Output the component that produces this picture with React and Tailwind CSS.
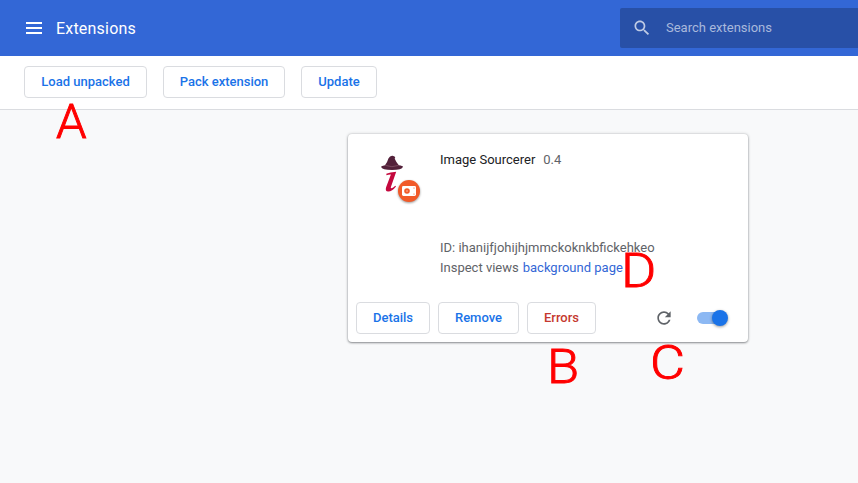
import React from "react";

function OutlineButton({ children, className = "" }) {
  return (
    <button
      className={`flex h-8 items-center justify-center rounded border border-[#dadce0] bg-white pb-px text-[13px] font-medium whitespace-nowrap ${className}`}
    >
      {children}
    </button>
  );
}

function Callout({ children, className }) {
  return (
    <span className={`absolute origin-left text-[49px] leading-[50px] font-light text-[#ff0000] [-webkit-text-stroke:0.9px_#ff0000] ${className}`}>
      {children}
    </span>
  );
}

function ExtensionIcon() {
  return (
    <svg width="48" height="56" viewBox="0 0 48 56" className="block overflow-visible">
      <path
        d="M9 15.300 Q11.500 12 12.400 8.500 Q14 5.400 16.500 5.700 Q19.300 6 19.300 8 L18.600 8.600 Q20 12 22.800 15.300 Q26.800 15.900 27 16.800 Q26 20 16 20 Q6 20 5 16.800 Q5.500 15.800 9 15.300Z"
        fill="#53213a"
      />
      <path d="M9.300 15.400 Q16 18 22.500 15.400" stroke="#8a5a6c" strokeWidth="0.700" fill="none" />
      <path
        d="M10.300 23.700 Q14 22.200 20.200 21.700 L14.900 37 Q14.200 39.400 17.200 37.600 L19.300 35.700 L20 36.500 Q16 41.700 12.100 41.600 Q8.900 41.300 10.100 37.200 L14.900 24.500 Q12.500 24.400 10.500 25.200Z"
        fill="#c4093e"
      />
      <circle cx="33" cy="41" r="11" fill="#f15a29" className="drop-shadow-[0_1px_1px_rgba(0,0,0,0.4)]" />
      <rect x="26" y="36" width="14" height="10" rx="1.400" fill="#fff" />
      <circle cx="31" cy="41" r="2.800" fill="#f15a29" />
      <circle cx="31" cy="41" r="0.800" fill="#fff" opacity="0.650" />
      <circle cx="38" cy="38" r="0.600" fill="#f15a29" />
      <circle cx="38" cy="44" r="0.600" fill="#f15a29" />
    </svg>
  );
}

export default function App() {
  return (
    <div className="relative flex h-[483px] w-[858px] flex-col overflow-hidden bg-[#f8f9fa] font-['Roboto',sans-serif]">
      <header className="flex h-14 shrink-0 items-center bg-[#3367d6] pl-[22px]">
        <svg width="24" height="24" viewBox="0 0 24 24" fill="#fff">
          <path d="M4 18h16v-2H4v2zm0-5h16v-2H4v2zm0-7v2h16V6H4z" />
        </svg>
        <h1 className="ml-[10px] pt-px text-[16px] font-normal tracking-[0.2px] text-white">Extensions</h1>
        <div className="ml-auto flex h-10 w-[238px] items-center rounded-l-[2px] bg-[#2850a7] pl-3">
          <svg width="20" height="20" viewBox="0 0 24 24" fill="#bfcbe5">
            <path d="M15.500 14h-.790l-.280-.270C15.410 12.590 16 11.110 16 9.500 16 5.910 13.090 3 9.500 3S3 5.910 3 9.500 5.910 16 9.500 16c1.610 0 3.090-.590 4.230-1.570l.270.280v.790l5 4.990L20.490 19l-4.990-5zm-6 0C7.010 14 5 11.990 5 9.500S7.010 5 9.500 5 14 7.010 14 9.500 11.990 14 9.500 14z" />
          </svg>
          <span className="ml-[14px] text-[13px] text-[#a9b9dc]">Search extensions</span>
        </div>
      </header>

      <div className="flex h-[54px] shrink-0 items-start gap-4 border-b border-[#dadce0] bg-white pt-[10px] pl-6">
        <OutlineButton className="w-[123px] text-[#1a73e8]">Load unpacked</OutlineButton>
        <OutlineButton className="w-[122px] text-[#1a73e8]">Pack extension</OutlineButton>
        <OutlineButton className="w-[76px] text-[#1a73e8]">Update</OutlineButton>
      </div>

      <main className="flex flex-1 pt-6 pl-[348px]">
        <article className="flex h-[208px] w-[400px] flex-col rounded bg-white shadow-[0_1px_2px_rgba(60,64,67,0.5),0_0_3px_rgba(60,64,67,0.3)]">
          <div className="flex flex-1 pt-4 pl-7">
            <ExtensionIcon />
            <div className="ml-4 flex flex-col text-[13px] leading-5 text-[#5f6368]">
              <div className="flex gap-2">
                <span className="text-[#202124]">Image Sourcerer</span>
                <span>0.4</span>
              </div>
              <div className="mt-[68px]">ID: ihanijfjohijhjmmckoknkbfickehkeo</div>
              <div className="flex gap-1">
                <span>Inspect views</span>
                <a className="text-[#3367d6]">background page</a>
              </div>
            </div>
          </div>
          <div className="flex h-12 shrink-0 items-center gap-2 pr-[21px] pl-2">
            <OutlineButton className="w-[74px] text-[#1a73e8]">Details</OutlineButton>
            <OutlineButton className="w-[81px] text-[#1a73e8]">Remove</OutlineButton>
            <OutlineButton className="w-[69px] text-[#c5392f]">Errors</OutlineButton>
            <svg className="ml-auto" width="20" height="20" viewBox="0 0 24 24" fill="#5f6368">
              <path d="M17.650 6.350C16.200 4.900 14.210 4 12 4c-4.420 0-7.990 3.580-7.990 8s3.570 8 7.990 8c3.730 0 6.840-2.550 7.730-6h-2.080c-.820 2.330-3.040 4-5.650 4-3.310 0-6-2.690-6-6s2.690-6 6-6c1.660 0 3.140.690 4.220 1.780L13 11h7V4l-2.350 2.350z" />
            </svg>
            <div className="ml-[15px] flex h-3 w-[30px] items-center justify-end rounded-full bg-[#8cb8f3]">
              <div className="-mr-px size-4 shrink-0 rounded-full bg-[#1a73e8] shadow-[0_1px_3px_rgba(0,0,0,0.4)]" />
            </div>
          </div>
        </article>
      </main>

      <Callout className="top-[97px] left-[56px]">A</Callout>
      <Callout className="top-[342px] left-[547px] scale-x-[1.07]">B</Callout>
      <Callout className="top-[338px] left-[650px] scale-x-[1.1]">C</Callout>
      <Callout className="top-[246px] left-[621px] scale-x-[1.1]">D</Callout>
    </div>
  );
}
